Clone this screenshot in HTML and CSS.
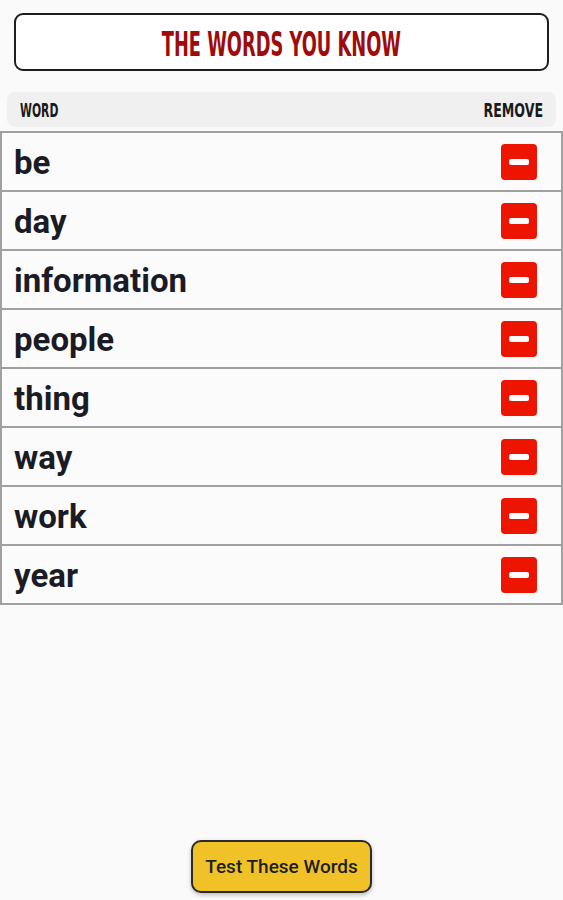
FILE: index.html
```html
<!DOCTYPE html>
<html lang="en">
<head>
    <meta charset="UTF-8">
    <meta name="viewport" content="width=device-width, initial-scale=1.0">
    <title>The Words You Know</title>
    <link rel="stylesheet" href="styles.css">
</head>
<body>
    <div class="title-box">
        <h1><span>The Words You Know</span></h1>
    </div>

    <div class="list-head">
        <span class="col-word">Word</span>
        <span class="col-remove">Remove</span>
    </div>

    <div class="word-list">
        <div class="word-row"><span class="word">be</span><button class="remove" title="Remove"></button></div>
        <div class="word-row"><span class="word">day</span><button class="remove" title="Remove"></button></div>
        <div class="word-row"><span class="word">information</span><button class="remove" title="Remove"></button></div>
        <div class="word-row"><span class="word">people</span><button class="remove" title="Remove"></button></div>
        <div class="word-row"><span class="word">thing</span><button class="remove" title="Remove"></button></div>
        <div class="word-row"><span class="word">way</span><button class="remove" title="Remove"></button></div>
        <div class="word-row"><span class="word">work</span><button class="remove" title="Remove"></button></div>
        <div class="word-row"><span class="word">year</span><button class="remove" title="Remove"></button></div>
    </div>

    <div class="footer">
        <button class="test-btn">Test These Words</button>
    </div>
</body>
</html>
```

FILE: styles.css
```css
body {
    margin: 0;
    background-color: #fafafa;
    font-family: Roboto, "Liberation Sans", sans-serif;
    min-height: 100vh;
    display: flex;
    flex-direction: column;
}
.title-box {
    margin: 13px 14px 0;
    height: 54px;
    border: 2px solid #1e1e1e;
    border-radius: 9px;
    background: #fff;
    display: flex;
    justify-content: center;
    align-items: center;
}
.title-box h1 {
    margin: 4px 0 0;
    font-family: "DejaVu Sans Condensed", sans-serif;
    font-weight: bold;
    font-size: 33px;
    color: #9d0b0b;
    text-transform: uppercase;
}
.title-box h1 span {
    display: inline-block;
    transform: scaleX(0.6);
}
.list-head {
    margin: 21px 7px 0;
    height: 35px;
    padding: 0 13px;
    background: #f0f0f0;
    border-radius: 8px;
    display: flex;
    justify-content: space-between;
    align-items: center;
    font-family: "DejaVu Sans Condensed", sans-serif;
    font-weight: bold;
    font-size: 20px;
    text-transform: uppercase;
    color: #1a1a1a;
}
.list-head span {
    display: inline-block;
}
.col-word {
    transform: scaleX(0.6);
    transform-origin: left center;
}
.col-remove {
    transform: scaleX(0.7);
    transform-origin: right center;
}
.word-list {
    margin-top: 4px;
}
.word-row {
    height: 57px;
    border: 2px solid #a0a0a0;
    border-top: none;
    background: #fbfbfb;
    display: flex;
    align-items: center;
    justify-content: space-between;
    padding: 0 24px 0 12px;
}
.word-row:first-child {
    border-top: 2px solid #a0a0a0;
}
.word {
    font-size: 33px;
    font-weight: bold;
    color: #1b1b26;
    margin-top: 2px;
}
.remove {
    position: relative;
    width: 36px;
    height: 36px;
    border: none;
    border-radius: 4px;
    background: #ee1500;
    cursor: pointer;
    padding: 0;
}
.remove:after {
    content: "";
    position: absolute;
    left: 8px;
    right: 8px;
    top: 15px;
    height: 6px;
    border-radius: 2px;
    background: #fff;
}
.footer {
    margin-top: auto;
    display: flex;
    justify-content: center;
    padding-bottom: 7px;
}
.test-btn {
    width: 181px;
    height: 53px;
    background: #f0c228;
    border: 2px solid #2a2a2a;
    border-radius: 10px;
    box-shadow: 0 2px 4px rgba(0, 0, 0, 0.25);
    font-family: Roboto, "Liberation Sans", sans-serif;
    font-size: 19px;
    font-weight: 500;
    color: #1e1e1e;
    cursor: pointer;
    padding: 0;
}
```
